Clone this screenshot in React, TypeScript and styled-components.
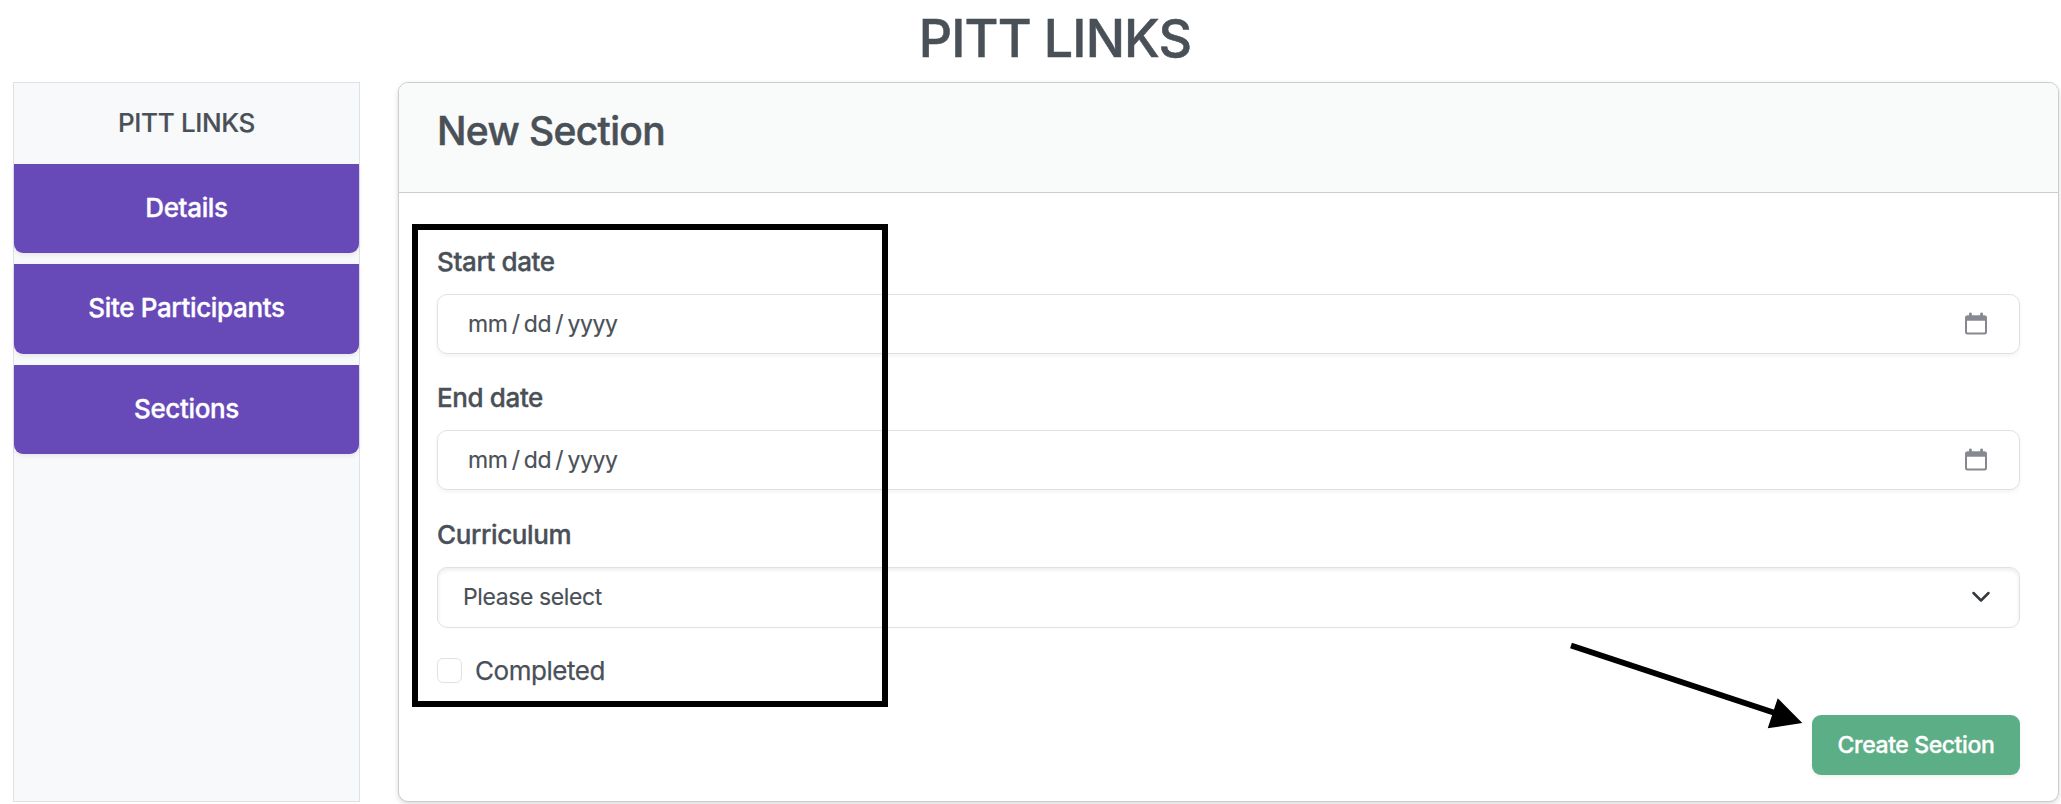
import React from "react";
import styled, { createGlobalStyle } from "styled-components";

const GlobalStyle = createGlobalStyle`
  *, *::before, *::after { box-sizing: border-box; }
  body {
    margin: 0;
    background: #fff;
    color: #495057;
    font-family: Inter, "Liberation Sans", sans-serif;
    font-size: 26px;
    letter-spacing: -0.35px;
    overflow: hidden;
  }
`;

const Page = styled.div`
  position: relative;
  height: 804px;
  padding: 0 2px 2px 13px;
  display: flex;
  flex-direction: column;
  overflow: hidden;
`;

const PageTitle = styled.h1`
  margin: 0;
  height: 82px;
  padding-left: 38px;
  padding-top: 8px;
  font-size: 52px;
  font-weight: 500;
  line-height: 62px;
  letter-spacing: -0.85px;
  text-align: center;
  -webkit-text-stroke: 0.5px;
`;

const Columns = styled.div`
  flex: 1;
  display: flex;
  gap: 38px;
`;

const Sidebar = styled.nav`
  width: 347px;
  border: 1px solid #dee2e6;
  background: #f8f9fb;
  display: flex;
  flex-direction: column;
  gap: 11px;
`;

const SidebarTitle = styled.div`
  height: 81px;
  margin-bottom: -11px;
  font-weight: 450;
  line-height: 80px;
  text-align: center;
  -webkit-text-stroke: 0.2px;
`;

const SidebarLink = styled.a`
  height: 89.4px;
  border-radius: 0 0 9px 9px;
  background: #674ab7;
  box-shadow: 0 2px 5px rgba(0, 0, 0, 0.08);
  color: #fff;
  font-weight: 500;
  line-height: 87.6px;
  text-align: center;
  -webkit-text-stroke: 0.35px;
`;

const Card = styled.section`
  flex: 1;
  border: 1px solid #cbcdcf;
  border-radius: 10px;
  box-shadow: 0 2px 5px rgba(0, 0, 0, 0.15);
  background: #fff;
  overflow: hidden;
`;

const CardHeader = styled.header`
  height: 110px;
  padding: 25px 38px;
  border-bottom: 1px solid #cbcdcf;
  background: #f9fafa;
`;

const CardTitle = styled.h2`
  margin: 0;
  font-size: 39px;
  font-weight: 500;
  line-height: 46px;
  letter-spacing: -0.65px;
  -webkit-text-stroke: 0.5px;
`;

const Form = styled.form`
  padding: 49px 38px 0;
  display: flex;
  flex-direction: column;
`;

const Field = styled.label`
  height: 136.3px;
  display: flex;
  flex-direction: column;
`;

const FieldName = styled.span`
  height: 52px;
  font-weight: 500;
  line-height: 40.3px;
  letter-spacing: -0.38px;
  -webkit-text-stroke: 0.35px;
`;

const Control = styled.span<{ $inset?: boolean }>`
  height: ${(p) => (p.$inset ? 61 : 60)}px;
  padding: ${(p) => (p.$inset ? "0 28px 0 25px" : "0 31px 0 30px")};
  border: 1px solid #dee2e6;
  border-radius: 10px;
  box-shadow: ${(p) => (p.$inset ? "inset 0 2px 4px rgba(0,0,0,0.08)" : "0 2px 4px rgba(0,0,0,0.05)")};
  display: flex;
  align-items: center;
  justify-content: space-between;
  font-size: 23px;
  letter-spacing: -0.4px;
  -webkit-text-stroke: 0.15px;
`;

const DateParts = styled.span`
  display: flex;
  gap: 4.2px;
`;

const CheckRow = styled.label`
  height: 62px;
  margin-top: -11px;
  display: flex;
  align-items: center;
  gap: 13px;
  font-weight: 400;
  line-height: 32px;
  letter-spacing: -0.45px;
  -webkit-text-stroke: 0.25px;
`;

const CheckBox = styled.span`
  width: 25px;
  height: 25px;
  border: 1px solid #dee2e6;
  border-radius: 6px;
`;

const SubmitButton = styled.button`
  align-self: flex-end;
  width: 208px;
  height: 60px;
  margin-top: 13px;
  padding: 0;
  border: 0;
  border-radius: 9px;
  background: #5cae86;
  box-shadow: 0 2px 4px rgba(0, 0, 0, 0.06);
  color: #fff;
  font: 500 23px Inter, "Liberation Sans", sans-serif;
  letter-spacing: -0.4px;
  -webkit-text-stroke: 0.35px;
`;

const Highlight = styled.div`
  position: absolute;
  left: 412px;
  top: 224px;
  width: 476px;
  height: 483px;
  border: 6px solid #000;
`;

const Arrow = styled.svg`
  position: absolute;
  left: 1560px;
  top: 630px;
`;

const CalendarIcon = () => (
  <svg width="24" height="24" viewBox="0 0 24 24">
    <path
      fill="#868a90"
      fillRule="evenodd"
      d="M5 1.800a1.400 1.400 0 0 1 2.800 0V3.300h8.400V1.800a1.400 1.400 0 0 1 2.800 0V3.300h1.500A2.500 2.500 0 0 1 23 5.800V20A2.500 2.500 0 0 1 20.500 22.500H3.500A2.500 2.500 0 0 1 1 20V5.800A2.500 2.500 0 0 1 3.500 3.300H5ZM3 8.700V19.700Q3 20.500 3.800 20.500H20.200Q21 20.500 21 19.700V8.700Z"
    />
  </svg>
);

const ChevronIcon = () => (
  <svg width="20" height="12" viewBox="0 0 20 12">
    <path d="M2.500 2L10 9.500L17.500 2" fill="none" stroke="#343a40" strokeWidth="2.500" strokeLinecap="round" strokeLinejoin="round" />
  </svg>
);

const DateField = ({ name }: { name: string }) => (
  <Field>
    <FieldName>{name}</FieldName>
    <Control>
      <DateParts>
        <span>mm</span>
        <span>/</span>
        <span>dd</span>
        <span>/</span>
        <span>yyyy</span>
      </DateParts>
      <CalendarIcon />
    </Control>
  </Field>
);

export default function App() {
  return (
    <>
      <GlobalStyle />
      <Page>
        <PageTitle>PITT LINKS</PageTitle>
        <Columns>
          <Sidebar>
            <SidebarTitle>PITT LINKS</SidebarTitle>
            {["Details", "Site Participants", "Sections"].map((item) => (
              <SidebarLink key={item}>{item}</SidebarLink>
            ))}
          </Sidebar>
          <Card>
            <CardHeader>
              <CardTitle>New Section</CardTitle>
            </CardHeader>
            <Form>
              <DateField name="Start date" />
              <DateField name="End date" />
              <Field>
                <FieldName>Curriculum</FieldName>
                <Control $inset>
                  Please select
                  <ChevronIcon />
                </Control>
              </Field>
              <CheckRow>
                <CheckBox />
                Completed
              </CheckRow>
              <SubmitButton type="button">Create Section</SubmitButton>
            </Form>
          </Card>
        </Columns>
        <Highlight />
        <Arrow width="260" height="110" viewBox="1560 630 260 110">
          <path d="M1571 645.500L1775 713" stroke="#000" strokeWidth="6" />
          <path d="M1777.700 698.300L1802.300 723L1767.700 728.300Z" />
        </Arrow>
      </Page>
    </>
  );
}
